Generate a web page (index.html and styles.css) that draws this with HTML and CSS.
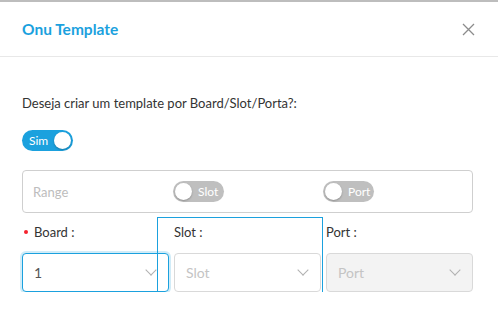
FILE: index.html
```html
<!DOCTYPE html>
<html lang="pt-BR">
<head>
  <meta charset="UTF-8">
  <meta name="viewport" content="width=device-width, initial-scale=1.0">
  <title>Onu Template</title>
  <link rel="stylesheet" href="styles.css">
</head>
<body>
  <div class="modal">
    <header class="modal-header">
      <h1>Onu Template</h1>
      <span class="close">
        <svg width="13" height="13" viewBox="0 0 13 13"><path d="M1 1L12 12M12 1L1 12" stroke="#8c8c8c" stroke-width="1.3" fill="none"/></svg>
      </span>
    </header>

    <div class="modal-body">
      <p class="question">Deseja criar um template por Board/Slot/Porta?:</p>

      <div class="switch on">
        <span class="switch-text">Sim</span>
        <span class="knob"></span>
      </div>

      <div class="range-box">
        <span class="range-label">Range</span>
        <div class="switch off">
          <span class="knob"></span>
          <span class="switch-text">Slot</span>
        </div>
        <div class="switch off">
          <span class="knob"></span>
          <span class="switch-text">Port</span>
        </div>
      </div>

      <div class="fields">
        <div class="field">
          <label class="required">Board :</label>
          <div class="select focused">
            <span class="value">1</span>
            <span class="arrow"></span>
          </div>
        </div>
        <div class="field highlight">
          <label>Slot :</label>
          <div class="select">
            <span class="placeholder">Slot</span>
            <span class="arrow"></span>
          </div>
        </div>
        <div class="field">
          <label>Port :</label>
          <div class="select disabled">
            <span class="placeholder">Port</span>
            <span class="arrow"></span>
          </div>
        </div>
      </div>
    </div>
  </div>
</body>
</html>
```

FILE: styles.css
```css
body {
  margin: 0;
  font-family: "Source Sans Pro", "Lato", "Noto Sans", sans-serif;
  background: #fff;
  color: #333;
}
.modal {
  border-top: 2px solid #bdbdbd;
}
.modal-header {
  height: 54px;
  padding: 0 22px;
  display: flex;
  justify-content: space-between;
  align-items: center;
  border-bottom: 1px solid #e8e8e8;
}
.modal-header h1 {
  margin: 0;
  font-size: 15.5px;
  font-weight: bold;
  color: #1ba1de;
}
.close { display: flex; margin-right: 1px; }
.modal-body {
  padding: 37px 25px 0 22px;
}
.question {
  margin: 0;
  font-size: 13px;
  line-height: 18px;
  color: #333;
}
.switch {
  width: 51px;
  height: 21px;
  border-radius: 11px;
  display: flex;
  align-items: center;
  box-sizing: border-box;
  font-size: 12px;
  color: #fff;
}
.switch.on {
  background: #1ba1de;
  margin-top: 18px;
  padding: 0 2px 0 7px;
  justify-content: space-between;
}
.switch.off {
  background: #bfbfbf;
  padding: 0 2px;
  gap: 6px;
}
.knob {
  width: 17px;
  height: 17px;
  border-radius: 50%;
  background: #fff;
  box-shadow: 0 1px 2px rgba(0,0,0,0.25);
}
.range-box {
  margin-top: 19px;
  height: 41px;
  border: 1px solid #cfcfcf;
  border-radius: 4px;
  display: grid;
  grid-template-columns: 140px 150px 1fr;
  align-items: center;
  padding-left: 10px;
}
.range-label {
  font-size: 13px;
  color: #bdbdbd;
}
.fields {
  margin-top: 9px;
  display: grid;
  grid-template-columns: repeat(3, 1fr);
  gap: 5px;
}
.field { position: relative; }
.field label {
  display: flex;
  align-items: center;
  font-size: 13px;
  line-height: 20px;
  margin-bottom: 11px;
  color: #333;
}
.field label.required::before {
  content: "";
  width: 4px;
  height: 4px;
  border-radius: 50%;
  background: #f5222d;
  margin: 0 6px 0 2px;
}
.highlight::after {
  content: "";
  position: absolute;
  top: -5px;
  left: -17px;
  right: -2px;
  bottom: -17px;
  border: 1px solid #1ba1de;
  pointer-events: none;
}
.select {
  height: 39px;
  box-sizing: border-box;
  border: 1px solid #d9d9d9;
  border-radius: 4px;
  display: flex;
  align-items: center;
  justify-content: space-between;
  padding: 0 13px 0 11px;
  font-size: 14px;
  background: #fff;
}
.select.focused {
  border-color: #1ba1de;
  box-shadow: 0 0 0 2px rgba(27,161,222,0.2);
}
.select.disabled { background: #f3f3f3; }
.value { color: #555; }
.placeholder { color: #c4c4c4; }
.arrow {
  width: 7px;
  height: 7px;
  border-right: 1px solid #b0b0b0;
  border-bottom: 1px solid #b0b0b0;
  transform: rotate(45deg);
  margin-top: -5px;
}
```
